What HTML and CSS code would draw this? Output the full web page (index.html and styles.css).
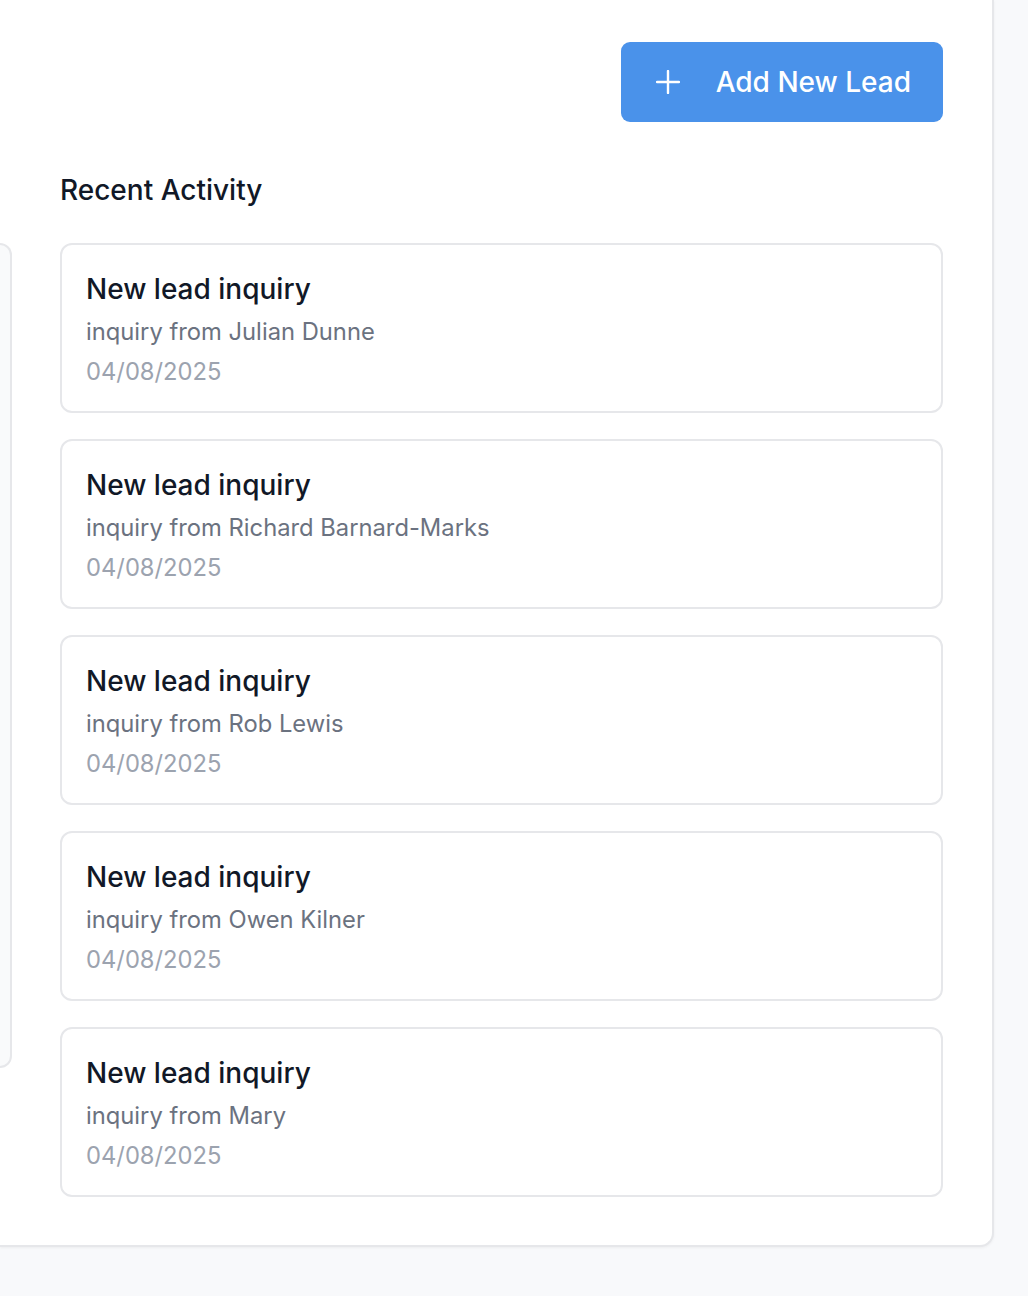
FILE: index.html
```html
<!DOCTYPE html>
<html lang="en">
<head>
<meta charset="utf-8">
<title>Recent Activity</title>
<link rel="stylesheet" href="styles.css">
</head>
<body>
<main class="panel">
  <div class="toolbar">
    <button class="btn-primary" type="button">
      <svg class="btn-icon" viewBox="0 0 24 24" width="24" height="24" aria-hidden="true"><path d="M12 1v22M1 12h22" fill="none" stroke="currentColor" stroke-width="2.4" stroke-linecap="round"/></svg>
      <span>Add New Lead</span>
    </button>
  </div>
  <div class="columns">
    <div class="side-card"></div>
    <h2 class="section-title">Recent Activity</h2>
    <ul class="activity-list">
      <li class="activity-card">
        <h3 class="activity-title">New lead inquiry</h3>
        <p class="activity-desc">inquiry from Julian Dunne</p>
        <p class="activity-date">04/08/2025</p>
      </li>
      <li class="activity-card">
        <h3 class="activity-title">New lead inquiry</h3>
        <p class="activity-desc">inquiry from Richard Barnard-Marks</p>
        <p class="activity-date">04/08/2025</p>
      </li>
      <li class="activity-card">
        <h3 class="activity-title">New lead inquiry</h3>
        <p class="activity-desc">inquiry from Rob Lewis</p>
        <p class="activity-date">04/08/2025</p>
      </li>
      <li class="activity-card">
        <h3 class="activity-title">New lead inquiry</h3>
        <p class="activity-desc">inquiry from Owen Kilner</p>
        <p class="activity-date">04/08/2025</p>
      </li>
      <li class="activity-card">
        <h3 class="activity-title">New lead inquiry</h3>
        <p class="activity-desc">inquiry from Mary</p>
        <p class="activity-date">04/08/2025</p>
      </li>
    </ul>
  </div>
</main>
</body>
</html>
```

FILE: styles.css
```css
* { box-sizing: border-box; }

html, body {
  margin: 0;
  padding: 0;
}

body {
  background: #f8f9fb;
  font-family: Inter, "Noto Sans", "Liberation Sans", sans-serif;
  color: #111827;
  min-height: 1296px;
}

.panel {
  width: 994px;
  background: #ffffff;
  border-right: 2px solid #e6e7ea;
  border-bottom: 2px solid #e6e7ea;
  border-bottom-right-radius: 14px;
  box-shadow: 0 1px 3px rgba(0, 0, 0, 0.05);
  padding: 42px 49px 48px 0;
}

.toolbar {
  display: flex;
  justify-content: flex-end;
}

.btn-primary {
  display: flex;
  align-items: center;
  gap: 36px;
  height: 80px;
  padding: 0 32px 0 35px;
  border: none;
  border-radius: 9px;
  background: #4a92ea;
  color: #ffffff;
  font-family: inherit;
  font-size: 28px;
  font-weight: 500;
}

.btn-icon {
  width: 24px;
  height: 24px;
}

.columns {
  display: grid;
  grid-template-columns: 12px 1fr;
  grid-template-areas:
    ". title"
    "side list";
  column-gap: 48px;
  margin-top: 50px;
}

.side-card {
  grid-area: side;
  height: 825px;
  background: #f9fafb;
  border: 2px solid #e6e7ea;
  border-left: none;
  border-radius: 0 14px 14px 0;
}

.section-title {
  grid-area: title;
  margin: 0 0 35px;
  font-size: 28px;
  line-height: 36px;
  font-weight: 500;
  color: #111827;
}

.activity-list {
  grid-area: list;
  list-style: none;
  margin: 0;
  padding: 0;
  display: flex;
  flex-direction: column;
  gap: 26px;
}

.activity-card {
  height: 170px;
  border: 2px solid #e6e7ea;
  border-radius: 12px;
  padding: 24px 24px 0 24px;
  background: #ffffff;
}

.activity-title {
  margin: 0;
  font-size: 28px;
  line-height: 40px;
  font-weight: 500;
  color: #111827;
}

.activity-desc {
  margin: 7px 0 0;
  font-size: 23.75px;
  line-height: 32px;
  color: #6b7280;
}

.activity-date {
  margin: 8px 0 0;
  font-size: 23.75px;
  line-height: 32px;
  color: #9ca3af;
}
```
